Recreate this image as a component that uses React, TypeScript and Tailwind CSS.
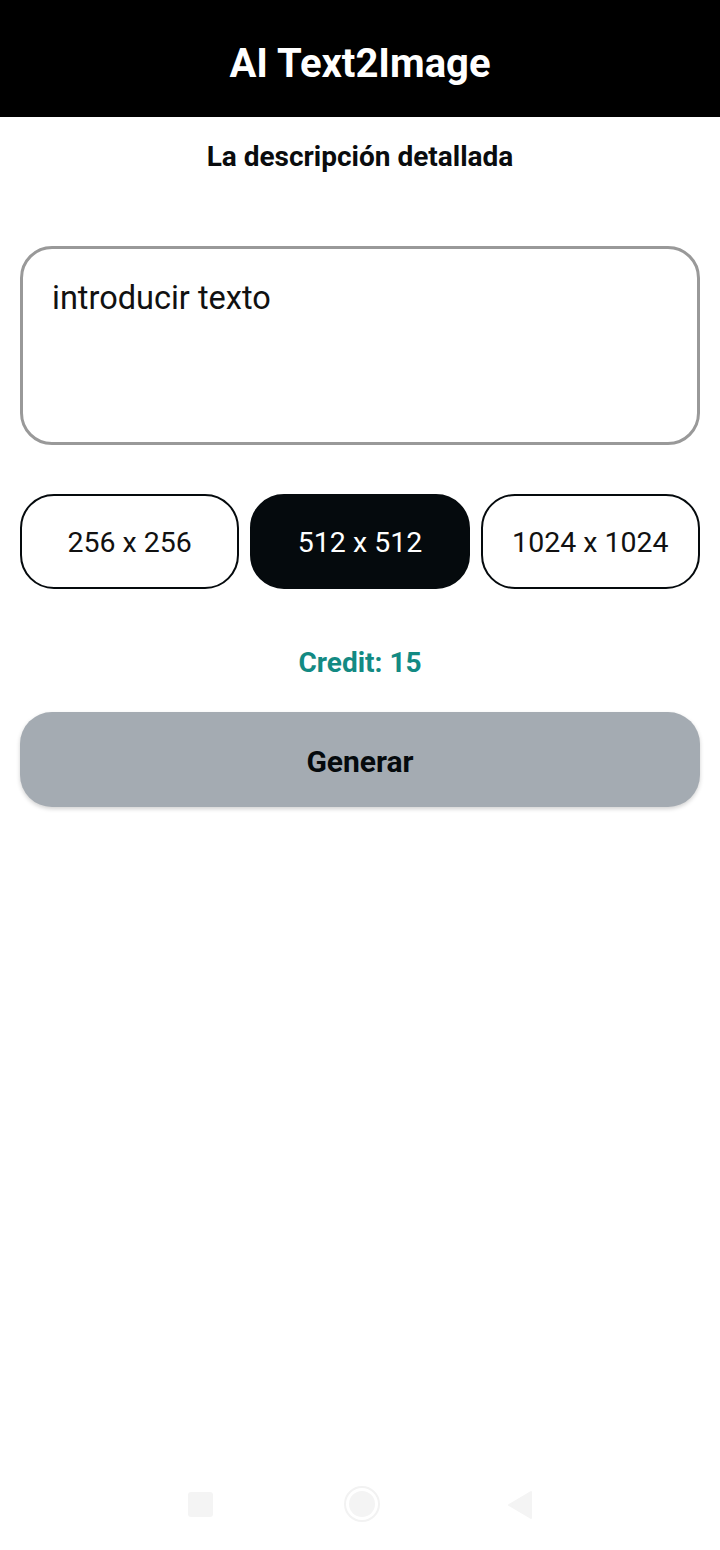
import { useState } from "react";

const sizes = ["256 x 256", "512 x 512", "1024 x 1024"];

export default function App() {
  const [size, setSize] = useState("512 x 512");
  const [prompt, setPrompt] = useState("");

  return (
    <div className="min-h-[1550px] bg-white flex flex-col font-['Roboto',sans-serif] text-[#0a0c0e]">
      {/* Header */}
      <header className="h-[117px] bg-black flex items-center justify-center pt-[10px]">
        <h1 className="text-white text-[40px] font-bold leading-none">AI Text2Image</h1>
      </header>

      <main className="flex flex-col px-[20px] pt-[24px]">
        <p className="text-center text-[28px] font-bold leading-[32px]">La descripción detallada</p>

        {/* Prompt */}
        <textarea
          value={prompt}
          onChange={(e) => setPrompt(e.target.value)}
          placeholder="introducir texto"
          className="mt-[73px] h-[199px] w-full resize-none rounded-[32px] border-[3px] border-[#999999] px-[29px] pt-[31px] text-[32.5px] leading-[36px] outline-none placeholder:text-[#111]"
        />

        {/* Size selector */}
        <div className="mt-[49px] grid grid-cols-3 gap-[11px]">
          {sizes.map((s) => (
            <button
              key={s}
              onClick={() => setSize(s)}
              className={
                s === size
                  ? "h-[95px] rounded-[34px] border-2 border-[#050a0d] bg-[#050a0d] pt-[4px] text-white text-[28.5px]"
                  : "h-[95px] rounded-[34px] border-2 border-[#050a0d] bg-white pt-[4px] text-[#111] text-[28.5px]"
              }
            >
              {s}
            </button>
          ))}
        </div>

        <p className="mt-[57px] text-center text-[28px] font-bold leading-[34px] text-[#138a83]">Credit: 15</p>

        <button className="mt-[32px] h-[95px] w-full rounded-[32px] bg-[#a4abb2] pt-[4px] text-[30px] font-bold text-[#050a0d] shadow-[0_2px_4px_rgba(0,0,0,0.18)]">
          Generar
        </button>
      </main>

      <div className="flex-1" />

      {/* Android nav bar */}
      <nav className="h-[90px] flex items-start justify-center pt-[25px]">
        <div className="w-[25px] h-[25px] rounded-[3px] bg-[#f4f4f4] mt-[7px]" />
        <svg width="38" height="38" viewBox="0 0 38 38" className="ml-[130px]">
          <circle cx="19" cy="19" r="17" fill="none" stroke="#f2f2f2" strokeWidth="2" />
          <circle cx="19" cy="19" r="13" fill="#f4f4f4" />
        </svg>
        <svg width="26" height="30" viewBox="0 0 26 30" className="ml-[126px] mt-[5px]">
          <path d="M24 2 L24 28 L2 15 Z" fill="#f4f4f4" strokeLinejoin="round" stroke="#f4f4f4" strokeWidth="2" />
        </svg>
      </nav>
    </div>
  );
}
